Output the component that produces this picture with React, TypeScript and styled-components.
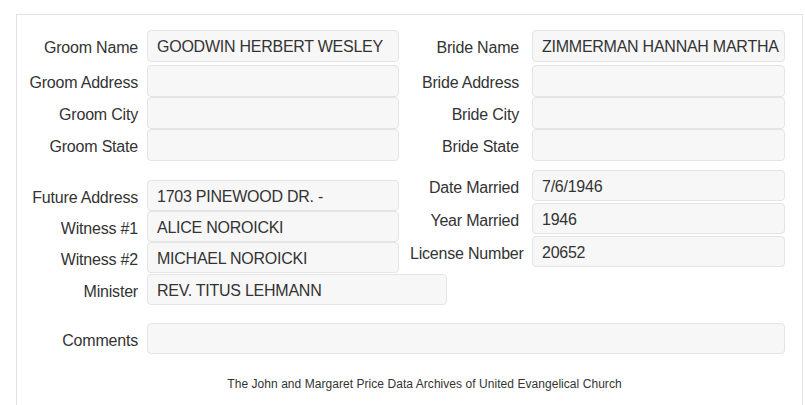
import React from "react";
import styled, { createGlobalStyle } from "styled-components";

const Global = createGlobalStyle`
  html, body { margin: 0; padding: 0; background: #ffffff; }
  body { font-family: "Liberation Sans", Arial, sans-serif; color: #333333; }
`;

const Page = styled.div`
  padding: 14px 0 0 16px;
  height: 405px;
  box-sizing: border-box;
  overflow: hidden;
`;

const Panel = styled.div`
  width: 787px;
  box-sizing: border-box;
  border: 1px solid #e3e3e3;
  border-bottom: none;
  padding: 15px 0 0 0;
  min-height: 420px;
`;

const Section = styled.div<{ $top?: number }>`
  display: flex;
  align-items: flex-start;
  margin-top: ${(p) => p.$top ?? 0}px;
`;

const Column = styled.div<{ $width: number; $padTop?: number; $left?: number }>`
  display: flex;
  flex-direction: column;
  width: ${(p) => p.$width}px;
  padding-top: ${(p) => p.$padTop ?? 0}px;
  margin-left: ${(p) => p.$left ?? 0}px;
`;

const Row = styled.div<{ $label: number; $gap: number; $input: number; $h: number; $mt?: number }>`
  display: grid;
  grid-template-columns: ${(p) => p.$label}px ${(p) => p.$input}px;
  column-gap: ${(p) => p.$gap}px;
  align-items: center;
  height: ${(p) => p.$h}px;
  margin-top: ${(p) => p.$mt ?? 0}px;
`;

const Label = styled.div`
  font-size: 16px;
  letter-spacing: -0.2px;
  text-align: right;
  white-space: nowrap;
  color: #333333;
  line-height: 18px;
  padding-top: 4px;
`;

const Field = styled.div<{ $h: number }>`
  height: ${(p) => p.$h}px;
  box-sizing: border-box;
  background: #f7f7f7;
  border: 1px solid #e4e4e4;
  border-radius: 4px;
  padding: 1px 9px 0 9px;
  font-size: 16px;
  letter-spacing: -0.25px;
  line-height: ${(p) => p.$h - 2}px;
  color: #333333;
  white-space: nowrap;
  overflow: hidden;
`;

const Footer = styled.div`
  text-align: center;
  font-size: 12px;
  letter-spacing: 0.05px;
  color: #333333;
  margin-top: 23px;
  padding-left: 30px;
`;

type F = { label: string; value?: string; h?: number; mt?: number; input?: number };

const LeftRow = ({ label, value = "", h = 32, mt = 0, input = 252 }: F) => (
  <Row $label={121} $gap={9} $input={input} $h={h} $mt={mt}>
    <Label>{label}</Label>
    <Field $h={h}>{value}</Field>
  </Row>
);

const RightRow = ({ label, value = "", h = 32, mt = 0, lw = 119 }: F & { lw?: number }) => (
  <Row $label={lw} $gap={13} $input={253} $h={h} $mt={mt}>
    <Label>{label}</Label>
    <Field $h={h}>{value}</Field>
  </Row>
);

export default function App() {
  return (
    <>
      <Global />
      <Page>
        <Panel>
          <Section>
            <Column $width={383}>
              <LeftRow label="Groom Name" value="GOODWIN HERBERT WESLEY" />
              <LeftRow label="Groom Address" mt={3} />
              <LeftRow label="Groom City" />
              <LeftRow label="Groom State" />
            </Column>
            <Column $width={385}>
              <RightRow label="Bride Name" value="ZIMMERMAN HANNAH MARTHA" />
              <RightRow label="Bride Address" mt={3} />
              <RightRow label="Bride City" />
              <RightRow label="Bride State" />
            </Column>
          </Section>
          <Section $top={9}>
            <Column $width={383} $padTop={10}>
              <LeftRow label="Future Address" value="1703 PINEWOOD DR. -" h={31} />
              <LeftRow label="Witness #1" value="ALICE NOROICKI" h={31} />
              <LeftRow label="Witness #2" value="MICHAEL NOROICKI" h={31} />
              <LeftRow label="Minister" value="REV. TITUS LEHMANN" h={31} mt={1} input={300} />
            </Column>
            <Column $width={385} $left={10}>
              <RightRow label="Date Married" value="7/6/1946" h={31} lw={109} />
              <RightRow label="Year Married" value="1946" h={31} mt={2} lw={109} />
              <RightRow label="License Number" value="20652" h={31} mt={2} lw={109} />
            </Column>
          </Section>
          <Section $top={18}>
            <LeftRow label="Comments" h={31} input={638} />
          </Section>
          <Footer>The John and Margaret Price Data Archives of United Evangelical Church</Footer>
        </Panel>
      </Page>
    </>
  );
}
